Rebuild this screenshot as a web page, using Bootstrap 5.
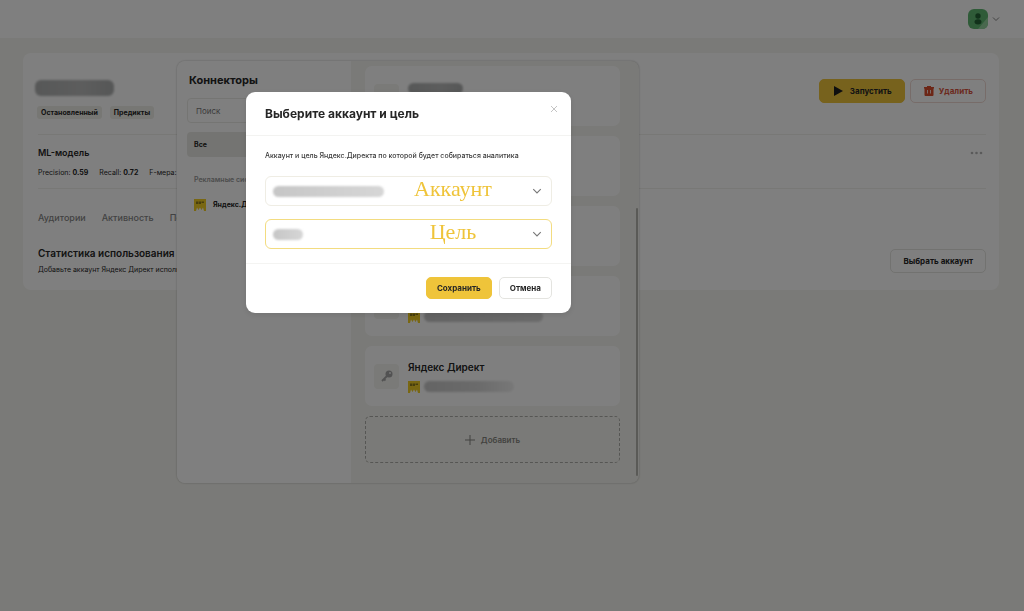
<!DOCTYPE html>
<html lang="ru">
<head>
<meta charset="utf-8">
<meta name="viewport" content="width=device-width, initial-scale=1">
<title>Коннекторы</title>
<link href="https://cdn.jsdelivr.net/npm/bootstrap@5.3.0/dist/css/bootstrap.min.css" rel="stylesheet">
<style>
:root { --sand: #f5f5f0; --edge: #ebebe6; --yellow: #efc43a; --ink: #262626; }
body { font-family: Inter, "Liberation Sans", sans-serif; font-size: 8px; line-height: 12px; color: var(--ink); background: var(--sand); min-height: 100vh; overflow: hidden; }
svg { display: block; flex: none; }
.topbar { height: 38px; background: #fff; padding: 0 24px; }
.panel { background: #fff; border-radius: 8px; margin: 15px 25px 0 23px; padding: 0 13px 0 15px; height: 237px; }
.rule { border-top: 1px solid #f0f0ec; }
.smudge { display: block; border-radius: 6px; background: linear-gradient(90deg, #c6c6c6, #d0d0d0 60%, #d6d6d6); filter: blur(1px); }
.smudge-dark { background: linear-gradient(90deg, #aeb0b0, #babbbb 60%, #acaeae); }
.smudge-fade { background: linear-gradient(90deg, #c8c8c8, #d6d6d6 60%, #f0f0f0); }
.chip { background: #efefe8; border-radius: 3px; padding: 0 4px; font-size: 7px; font-weight: 700; line-height: 13px; }
.chips { margin: 10px 0 0 -1px; gap: 8px; }
.head-row { height: 81px; }
.head-actions { padding-top: 26px; gap: 5px; }
.model-row { height: 54px; }
.tabs-row { height: 58px; gap: 16px; font-size: 9px; font-weight: 500; }
.tabs-row a { color: #858585; text-decoration: none; }
.h-small { font-size: 9px; font-weight: 600; margin: 0; line-height: 14px; padding-top: 11px; }
.h-stat { font-size: 10px; font-weight: 600; margin: 0; line-height: 14px; }
.tiny { font-size: 7px; }
.metrics { gap: 11px; margin-top: 7px; }
.ui-btn { font-size: 8px; font-weight: 700; line-height: 12px; border: 1px solid #e4e4e0; border-radius: 5px; background: #fff; color: var(--ink); padding: 0 10px; height: 22px; }
.ui-btn.yellow { background: var(--yellow); border-color: var(--yellow); }
.ui-btn.tall { height: 24px; padding: 0 12px; }
.ui-btn.danger { color: #d85440; border-color: #efd9d3; }
.drawer { position: absolute; top: 61px; left: 177px; width: 462px; height: 422px; border-radius: 8px; overflow: hidden; box-shadow: 0 0 2px rgba(0,0,0,.3); background: var(--sand); }
.drawer-nav { width: 174px; background: #fff; padding: 11px 10px; }
.drawer-title { font-size: 11px; font-weight: 700; line-height: 16px; margin: 0 2px 10px; }
.search { border: 1px solid var(--edge); border-radius: 4px; height: 25px; width: 100%; padding: 0 8px; font-size: 8px; }
.search::placeholder { color: #777; }
.nav-all { background: #e9e9e4; border-radius: 4px; height: 25px; padding: 0 7px; margin-top: 9px; font-size: 7px; font-weight: 700; color: var(--ink); text-decoration: none; }
.group-name { color: #999; font-size: 7px; font-weight: 600; margin: 17px 7px 13px; }
.nav-item-link { gap: 7px; font-weight: 700; padding-left: 7px; }
.drawer-list { padding: 5px 16px 20px 14px; gap: 10px; border-right: 3px solid transparent; }
.conn { background: #fff; border-radius: 7px; height: 60px; flex: none; padding: 0 9px; gap: 9px; }
.key-box { width: 25px; height: 25px; border-radius: 4px; background: #f4f4f0; }
.conn-name { font-size: 10px; font-weight: 600; line-height: 14px; height: 14px; margin-bottom: 7px; }
.conn-sub { gap: 4px; }
.add-btn { border: 1px dashed #adada8; border-radius: 5px; height: 47px; flex: none; background: transparent; color: #858580; font-size: 8px; font-weight: 600; gap: 6px; }
.thumb { position: absolute; right: 1px; top: 147px; bottom: 7px; width: 2px; border-radius: 2px; background: #b5b5ae; }
.veil { position: fixed; inset: 0; background: rgba(0,0,0,.5); }
.dialog-box { position: fixed; top: 92px; left: 246px; width: 325px; background: #fff; border-radius: 9px; box-shadow: 0 2px 6px rgba(0,0,0,.1); }
.dialog-head { height: 44px; padding: 0 13px 0 19px; border-bottom: 1px solid #f3f3f1; }
.dialog-title { font-size: 12px; font-weight: 700; line-height: 18px; margin: 0; }
.dialog-close { background: none; border: 0; padding: 0; margin-bottom: 10px; }
.dialog-main { padding: 14px 19px; }
.dialog-main p { margin: 0 0 14px; font-size: 7px; font-weight: 500; color: #3a3a3a; }
.pick { position: relative; }
.pick select { appearance: none; display: block; width: 100%; height: 30px; border: 1px solid #efede4; border-radius: 6px; background: #fff; }
.pick.active select { border-color: #f3dc80; }
.pick + .pick { margin-top: 13px; }
.pick-over { position: absolute; inset: 0; pointer-events: none; padding: 0 10px 0 8px; }
.pick-name { position: absolute; left: 31%; right: 0; text-align: center; top: 0; font: 22px/26px "Liberation Serif", serif; color: var(--yellow); }
.dialog-foot { height: 50px; border-top: 1px solid #f4f4f2; padding: 0 19px 2px; gap: 7px; }
</style>
</head>
<body>
<svg width="0" height="0" class="position-absolute" aria-hidden="true">
  <symbol id="direct" viewBox="0 0 12 12"><path d="M0 0h12v12H10L9 8.500 7.500 11 6 8.500 4.500 11 3 8.500 2 12H0z" fill="#f2cf24"/><path d="M2 2.500h2.500v2.500H2zm3 0h2v2.500H5zm2.500 0H10v1.500H7.500z" fill="#8f7c1c"/></symbol>
  <symbol id="key" viewBox="0 0 12 12"><circle cx="8" cy="4" r="3.500" fill="#a5a5a5"/><path d="M6 6 1 11M3 9l1.500 1.500" stroke="#a5a5a5" stroke-width="1.800" fill="none"/><circle cx="9" cy="3" r="1" fill="#eee"/></symbol>
  <symbol id="down" viewBox="0 0 8 6"><path d="M1 1.500 4 4.500 7 1.500" fill="none" stroke="#777" stroke-width=".9"/></symbol>
</svg>

<header class="topbar d-flex align-items-center justify-content-end">
  <button class="btn p-0 border-0 d-flex align-items-center gap-1" aria-label="Профиль">
    <svg width="20" height="20" viewBox="0 0 20 20"><rect width="20" height="20" rx="6" fill="#5fb671"/><path d="M20 8v6q0 6-6 6h-4z" fill="#92d09c"/><circle cx="10" cy="7" r="2.700" fill="#226334"/><ellipse cx="10" cy="12.800" rx="3.500" ry="2.600" fill="#226334"/></svg>
    <svg width="8" height="6"><use href="#down"/></svg>
  </button>
</header>

<main class="panel">
  <div class="head-row d-flex justify-content-between">
    <div>
      <span class="smudge smudge-dark" style="width:79px;height:16px;margin:27px 0 0 -3px"></span>
      <div class="chips d-flex"><span class="chip">Остановленный</span><span class="chip">Предикты</span></div>
    </div>
    <div class="head-actions d-flex align-items-start">
      <button class="ui-btn tall yellow d-flex align-items-center gap-1"><svg width="14" height="12" viewBox="0 0 14 12"><path d="M2 1v10l9-5z" fill="#1e1e1e"/></svg>Запустить</button>
      <button class="ui-btn tall danger d-flex align-items-center gap-1"><svg width="12" height="12" viewBox="0 0 12 12"><path d="M1 2h3V1h4v1h3v1.500H1zM1.500 3.500h9V10q0 1-1 1h-7q-1 0-1-1z" fill="#d84c2c"/><path d="M4.500 5v3.500m3-3.500v3.500" stroke="#fff" stroke-width=".8"/></svg>Удалить</button>
    </div>
  </div>
  <section class="rule model-row d-flex justify-content-between">
    <div>
      <h2 class="h-small">ML-модель</h2>
      <div class="metrics tiny d-flex"><span>Precision: <b>0.59</b></span><span>Recall: <b>0.72</b></span><span>F-мера: <b>0.65</b></span></div>
    </div>
    <button class="btn border-0 align-self-start p-0 mt-3" style="margin-right:3px" aria-label="Ещё"><svg width="13" height="4" viewBox="0 0 13 4"><g fill="#b5b5b5"><circle cx="2" cy="2" r="1.300"/><circle cx="6.500" cy="2" r="1.300"/><circle cx="11" cy="2" r="1.300"/></g></svg></button>
  </section>
  <nav class="rule tabs-row d-flex align-items-center"><a href="#">Аудитории</a><a href="#">Активность</a><a href="#">Подключения</a></nav>
  <section class="d-flex justify-content-between align-items-center">
    <div><h2 class="h-stat">Статистика использования аудиторий</h2><p class="tiny m-0 mt-1">Добавьте аккаунт Яндекс Директ используемый для рекламы</p></div>
    <button class="ui-btn tall">Выбрать аккаунт</button>
  </section>
</main>

<aside class="drawer d-flex">
  <div class="drawer-nav">
    <h1 class="drawer-title">Коннекторы</h1>
    <input class="search" type="search" placeholder="Поиск" aria-label="Поиск">
    <a href="#" class="nav-all d-flex align-items-center">Все</a>
    <div class="group-name">Рекламные системы</div>
    <a href="#" class="nav-item-link tiny d-flex align-items-center text-decoration-none text-reset"><svg width="12" height="12"><use href="#direct"/></svg>Яндекс.Директ</a>
  </div>
  <div class="drawer-list d-flex flex-column flex-fill">
    <article class="conn d-flex align-items-center"><div class="key-box"></div><div><div class="conn-name d-flex align-items-end"><span class="smudge smudge-dark" style="width:55px;height:11px"></span></div><div class="conn-sub d-flex"><svg width="12" height="12"><use href="#direct"/></svg><span class="smudge" style="width:90px;height:11px"></span></div></div></article>
    <article class="conn d-flex align-items-center"><div class="key-box"></div></article>
    <article class="conn d-flex align-items-center"><div class="key-box"></div></article>
    <article class="conn d-flex align-items-center"><div class="key-box"></div><div><div class="conn-name"></div><div class="conn-sub d-flex"><svg width="12" height="12"><use href="#direct"/></svg><span class="smudge" style="width:119px;height:11px"></span></div></div></article>
    <article class="conn d-flex align-items-center"><div class="key-box d-flex align-items-center justify-content-center"><svg width="12" height="12"><use href="#key"/></svg></div><div><div class="conn-name">Яндекс Директ</div><div class="conn-sub d-flex"><svg width="12" height="12"><use href="#direct"/></svg><span class="smudge smudge-fade" style="width:90px;height:11px"></span></div></div></article>
    <button class="add-btn d-flex align-items-center justify-content-center"><svg width="10" height="10" viewBox="0 0 10 10"><path d="M5 0v10M0 5h10" stroke="#858580"/></svg>Добавить</button>
  </div>
  <span class="thumb"></span>
</aside>

<div class="veil"></div>
<form class="dialog-box" role="dialog" aria-labelledby="dlg">
  <div class="dialog-head d-flex align-items-center justify-content-between">
    <h2 class="dialog-title" id="dlg">Выберите аккаунт и цель</h2>
    <button type="button" class="dialog-close" aria-label="Закрыть"><svg width="8" height="8" viewBox="0 0 8 8"><path d="M1 1l6 6M7 1 1 7" stroke="#c4c4c4"/></svg></button>
  </div>
  <div class="dialog-main">
    <p>Аккаунт и цель Яндекс.Директа по которой будет собираться аналитика</p>
    <div class="pick">
      <select id="acc"><option></option></select>
      <div class="pick-over d-flex align-items-center justify-content-between"><span class="smudge" style="width:111px;height:11px"></span><svg width="10" height="8"><use href="#down"/></svg></div>
      <label class="pick-name" for="acc">Аккаунт</label>
    </div>
    <div class="pick active">
      <select id="goal"><option></option></select>
      <div class="pick-over d-flex align-items-center justify-content-between"><span class="smudge" style="width:30px;height:11px"></span><svg width="10" height="8"><use href="#down"/></svg></div>
      <label class="pick-name" for="goal">Цель</label>
    </div>
  </div>
  <div class="dialog-foot d-flex align-items-center justify-content-end">
    <button type="submit" class="ui-btn yellow">Сохранить</button>
    <button type="button" class="ui-btn">Отмена</button>
  </div>
</form>
<script src="https://cdn.jsdelivr.net/npm/bootstrap@5.3.0/dist/js/bootstrap.bundle.min.js"></script>
</body>
</html>
